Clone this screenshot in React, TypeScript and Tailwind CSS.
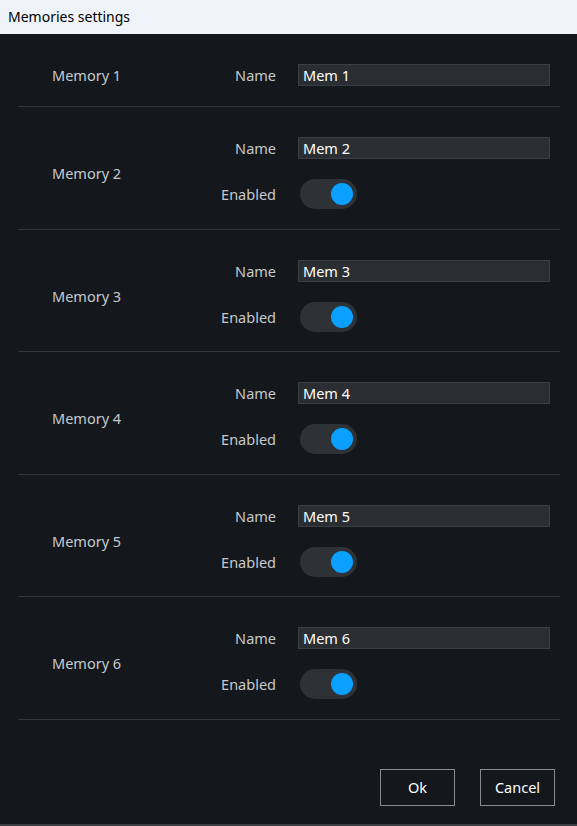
import React from "react";

function Toggle() {
  return (
    <div className="w-[57px] h-[30px] rounded-full bg-[#2e3237] flex items-center justify-end pr-[4px]">
      <div className="w-[22px] h-[22px] rounded-full bg-[#0aa0ff]" />
    </div>
  );
}

function Row({ idx }: { idx: number }) {
  const first = idx === 1;
  const tall = idx % 2 === 0;
  return (
    <div
      className={
        "flex items-center border-b border-[#33373b] pt-[30px] " +
        (first ? "pb-[20px]" : tall ? "pb-[20px]" : "pb-[19px]")
      }
    >
      <div className="w-[166px] pl-[34px] text-[#c5c9cd]">Memory {idx}</div>
      <div className="grid grid-cols-[92px_252px] gap-x-[22px] gap-y-[20px] items-center">
        <div className="text-right text-[#c5c9cd]">Name</div>
        <div className="h-[22px] bg-[#2a2e33] border border-[#3a3e43] flex items-center pl-[4px] text-white">
          Mem {idx}
        </div>
        {!first && (
          <>
            <div className="text-right text-[#c5c9cd]">Enabled</div>
            <div className="pl-[2px]">
              <Toggle />
            </div>
          </>
        )}
      </div>
    </div>
  );
}

export default function App() {
  return (
    <div
      className="w-[577px] h-[826px] flex flex-col text-[14.5px] leading-none"
      style={{ fontFamily: '"Noto Sans", "Open Sans", sans-serif' }}
    >
      <div className="h-[34px] bg-[#eff3fa] flex items-center pl-[8px] text-black text-[14px] shrink-0">
        Memories settings
      </div>
      <div className="flex-1 bg-[#14181c] flex flex-col border-b-2 border-[#3b3f43]">
        <div className="pl-[18px] pr-[17px]">
          {[1, 2, 3, 4, 5, 6].map((i) => (
            <Row key={i} idx={i} />
          ))}
        </div>
        <div className="flex-1 flex items-end justify-end gap-[25px] pr-[22px] pb-[18px]">
          <button className="w-[75px] h-[37px] border border-[#8a8d90] text-white flex items-center justify-center">
            Ok
          </button>
          <button className="w-[75px] h-[37px] border border-[#8a8d90] text-white flex items-center justify-center">
            Cancel
          </button>
        </div>
      </div>
    </div>
  );
}
